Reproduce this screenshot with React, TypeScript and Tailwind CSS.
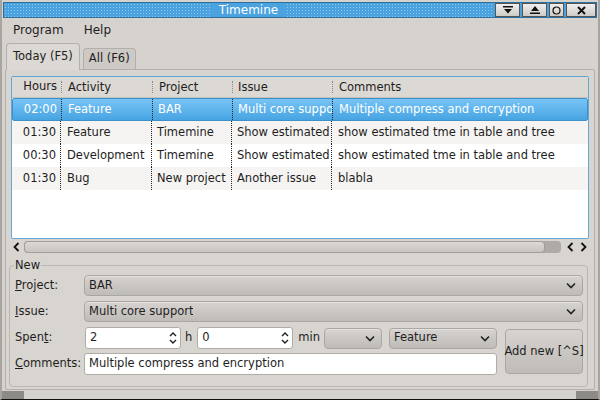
import React from "react";

const rows = [
  { h: "02:00", a: "Feature", p: "BAR", i: "Multi core support", c: "Multiple compress and encryption", sel: true },
  { h: "01:30", a: "Feature", p: "Timemine", i: "Show estimated time", c: "show estimated tme in table and tree" },
  { h: "00:30", a: "Development", p: "Timemine", i: "Show estimated time", c: "show estimated tme in table and tree" },
  { h: "01:30", a: "Bug", p: "New project", i: "Another issue", c: "blabla" },
];

const font = "font-['DejaVu_Sans',sans-serif]";

const Chevron = () => (
  <svg width="10" height="7" viewBox="0 0 10 7" className="shrink-0">
    <path d="M1 1.5 L5 5.5 L9 1.5" fill="none" stroke="#222" strokeWidth="1.6" />
  </svg>
);

const Arrow = ({ left }: { left?: boolean }) => (
  <svg width="7" height="10" viewBox="0 0 7 10" className="shrink-0">
    <path d={left ? "M5.5 1 L1.5 5 L5.5 9" : "M1.5 1 L5.5 5 L1.5 9"} fill="none" stroke="#111" strokeWidth="1.8" />
  </svg>
);

const Combo = ({ text, className }: { text?: string; className?: string }) => (
  <div
    className={
      "flex items-center justify-between rounded-[4px] border border-[#aaa6a2] bg-gradient-to-b from-[#d6d3d0] to-[#bfbbb7] pl-[4px] pr-[6px] h-[21px] shadow-[inset_0_1px_0_#e4e2e0] " +
      (className || "")
    }
  >
    <span className="truncate">{text}</span>
    <Chevron />
  </div>
);

const Spin = ({ v }: { v: string }) => (
  <div className="flex items-center justify-between w-[96px] h-[22px] rounded-[3px] border border-[#b0aca8] bg-white pl-[4px] pr-[3px]">
    <span>{v}</span>
    <svg width="8" height="14" viewBox="0 0 8 14">
      <path d="M1 5 L4 2 L7 5 M1 9 L4 12 L7 9" fill="none" stroke="#222" strokeWidth="1.4" />
    </svg>
  </div>
);

const Label = ({ u, rest }: { u: string; rest: string }) => (
  <span className="w-[69px] shrink-0">
    <span className="underline">{u}</span>
    {rest}
  </span>
);

export default function App() {
  return (
    <div className={`w-[600px] h-[400px] bg-[#d6d2ce] text-[11.5px] text-[#1e1e1e] ${font} flex flex-col border-x-[2px] border-b border-[#a8a4a0] border-b-[#111] overflow-hidden`}>
      {/* title bar */}
      <div className="flex items-stretch h-[16px] mt-[2px] mx-[1px] bg-[#4aa2de] bg-[radial-gradient(circle,#8cc8f0_0.8px,transparent_1px)] bg-[length:3px_3px] border border-[#2f6fa0]">
        <div className="flex-1 flex justify-center">
          <span className="bg-[#4aa2de] px-[8px] text-white text-[12px] leading-[14px]">Timemine</span>
        </div>
        <div className="flex gap-[2px] bg-[#4aa2de] pl-[2px]">
          <div className="w-[25px] bg-gradient-to-b from-[#f0efee] to-[#cfcbc7] border border-[#555] flex items-center justify-center">
            <svg width="10" height="8" viewBox="0 0 10 8"><path d="M0 0h10v1.5H0z M1 3h8L5 7.5z" fill="#111" /></svg>
          </div>
          <div className="w-[25px] bg-gradient-to-b from-[#f0efee] to-[#cfcbc7] border border-[#555] flex items-center justify-center">
            <svg width="10" height="8" viewBox="0 0 10 8"><path d="M1 5h8L5 0z M0 6.5h10V8H0z" fill="#111" /></svg>
          </div>
          <div className="w-[15px] bg-gradient-to-b from-[#f0efee] to-[#cfcbc7] border border-[#555] flex items-center justify-center">
            <svg width="9" height="9" viewBox="0 0 9 9"><circle cx="4.5" cy="4.5" r="3.5" fill="none" stroke="#111" strokeWidth="1.2" /></svg>
          </div>
          <div className="w-[30px] bg-gradient-to-b from-[#f0efee] to-[#cfcbc7] border border-[#555] flex items-center justify-center">
            <svg width="9" height="9" viewBox="0 0 9 9"><path d="M1 1 L8 8 M8 1 L1 8" stroke="#111" strokeWidth="2" /></svg>
          </div>
        </div>
      </div>

      {/* menu */}
      <div className="flex gap-[20px] px-[11px] h-[24px] items-center text-[12px]">
        <span>Program</span>
        <span>Help</span>
      </div>

      {/* tabs */}
      <div className="flex items-end px-[4px] h-[27px]">
        <div className="h-[27px] px-[6px] flex items-center rounded-t-[4px] border border-b-0 border-[#b3afab] bg-[#dcd8d4] relative top-[1px] z-10">
          Today (F5)
        </div>
        <div className="h-[21px] ml-[3px] px-[5px] flex items-center rounded-t-[4px] border border-b-0 border-[#b3afab] bg-[#cdc9c5]">
          All (F6)
        </div>
      </div>

      {/* tab panel */}
      <div className="flex-1 mx-[3px] border border-[#b3afab] bg-[#d8d4d0] rounded-[2px] flex flex-col px-[5px] pt-[6px] pb-[2px]">
        {/* table */}
        <div className="h-[163px] border border-[#5fa8d8] rounded-[2px] bg-white overflow-hidden flex flex-col">
          <div className="flex h-[21px] bg-[#dcd8d4] border-b border-[#c6c2be] items-center">
            <div className="w-[49px] text-right pr-[4px]">Hours</div>
            <div className="w-[91px] pl-[6px] border-l border-dotted border-[#888] h-[12px] leading-[12px]">Activity</div>
            <div className="w-[80px] pl-[6px] border-l border-dotted border-[#888] h-[12px] leading-[12px]">Project</div>
            <div className="w-[100px] pl-[5px] border-l border-dotted border-[#888] h-[12px] leading-[12px]">Issue</div>
            <div className="flex-1 pl-[6px] border-l border-dotted border-[#888] h-[12px] leading-[12px]">Comments</div>
          </div>
          {rows.map((r, k) => (
            <div
              key={k}
              className={
                "flex h-[23px] items-stretch " +
                (r.sel
                  ? "bg-gradient-to-b from-[#78c4f6] to-[#46a4e2] text-white border border-[#3d90c8] rounded-[2px]"
                  : k % 2 === 1
                  ? "bg-[#f5f4f3]"
                  : "bg-white")
              }
            >
              <div className="w-[49px] text-right pr-[4px] flex items-center justify-end border-r border-dotted border-[#222]">{r.h}</div>
              <div className="w-[91px] pl-[6px] flex items-center border-r border-dotted border-[#222] whitespace-nowrap overflow-hidden">{r.a}</div>
              <div className="w-[80px] pl-[5px] flex items-center border-r border-dotted border-[#222] whitespace-nowrap overflow-hidden">{r.p}</div>
              <div className="w-[100px] pl-[5px] flex items-center border-r border-dotted border-[#222] whitespace-nowrap overflow-hidden text-clip">
                <span className="block overflow-hidden">{r.i}</span>
              </div>
              <div className="flex-1 pl-[6px] flex items-center whitespace-nowrap">{r.c}</div>
            </div>
          ))}
        </div>

        {/* scrollbar */}
        <div className="flex items-center h-[16px] pl-[2px]">
          <Arrow left />
          <div className="flex-1 ml-[4px] h-[12px] rounded-[4px] bg-[#aeaaa6] flex">
            <div className="w-[521px] h-[12px] rounded-[4px] border border-[#a29e9a] bg-gradient-to-b from-[#dcd9d6] to-[#c8c4c0]" />
          </div>
          <div className="flex gap-[6px] ml-[6px] mr-[2px]">
            <Arrow left />
            <Arrow />
          </div>
        </div>

        {/* group box */}
        <div className="relative flex-1 mt-[10px] -ml-[2px] mr-[1px] border border-[#bab6b2] rounded-[4px] pl-[5px] pr-[4px] pt-[9px] pb-[4px] flex flex-col gap-[5px]">
          <span className="absolute -top-[8px] left-[4px] px-[1px] bg-[#d8d4d0] leading-[14px]">New</span>
          <div className="flex items-center">
            <Label u="P" rest="roject:" />
            <Combo text="BAR" className="flex-1" />
          </div>
          <div className="flex items-center">
            <Label u="I" rest="ssue:" />
            <Combo text="Multi core support" className="flex-1" />
          </div>
          <div className="flex gap-[8px]">
            <div className="flex-1 flex flex-col gap-[4px]">
              <div className="flex items-center">
                <span className="w-[70px] shrink-0">
                  Spen<span className="underline">t</span>:
                </span>
                <Spin v="2" />
                <span className="ml-[4px] mr-[5px]">h</span>
                <Spin v="0" />
                <span className="ml-[5px] mr-[4px]">min</span>
                <Combo className="w-[58px]" />
                <Combo text="Feature" className="flex-1 ml-[7px]" />
              </div>
              <div className="flex items-center">
                <span className="w-[69px] shrink-0">
                  <span className="underline">C</span>omments:
                </span>
                <div className="flex-1 h-[22px] rounded-[3px] border border-[#b0aca8] bg-white pl-[4px] flex items-center">
                  Multiple compress and encryption
                </div>
              </div>
            </div>
            <div className="w-[78px] h-[45px] mt-[2px] rounded-[4px] border border-[#aaa6a2] bg-gradient-to-b from-[#d6d3d0] to-[#bfbbb7] flex items-center justify-center whitespace-nowrap">
              Add new [^S]
            </div>
          </div>
        </div>
      </div>

      {/* status bar */}
      <div className="h-[9px] flex pt-[1px]">
        <div className="w-[22px] bg-[#8e8a86]" />
        <div className="flex-1" />
        <div className="w-[22px] bg-[#8e8a86]" />
      </div>
    </div>
  );
}
